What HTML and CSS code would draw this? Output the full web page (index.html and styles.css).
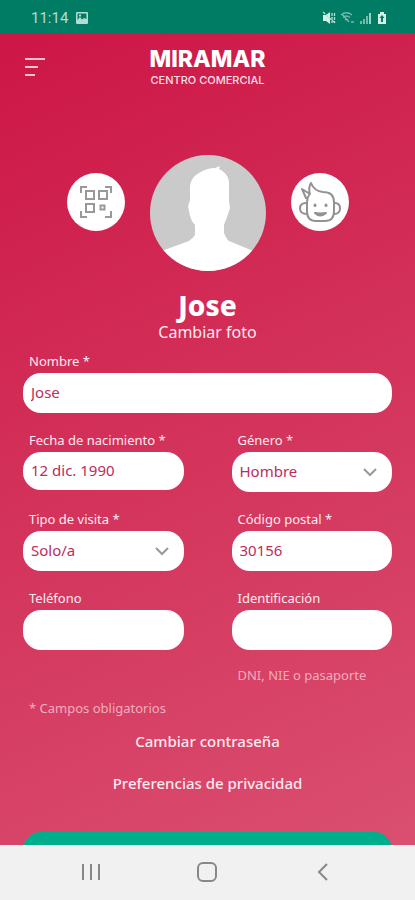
FILE: index.html
```html
<!DOCTYPE html>
<html lang="es">
<head>
<meta charset="utf-8">
<meta name="viewport" content="width=device-width, initial-scale=1">
<title>Miramar Centro Comercial</title>
<link rel="stylesheet" href="styles.css">
</head>
<body>
<div class="status">
  <span class="time">11:14</span>
  <svg class="status-picture" width="14" height="14" viewBox="0 0 14 14"><path fill="#b5dcd2" fill-rule="evenodd" d="M2 1h10q1 0 1 1v10q0 1-1 1H2q-1 0-1-1V2q0-1 1-1zM2.500 2.500v6.500l2.500-3 2 2.500 2-1.500 2.500 1V2.500zM4 3.500h2v2H4z"/></svg>
  <div class="status-icons">
    <svg width="14" height="14" viewBox="0 0 14 14"><path fill="#d5eee7" d="M1 4h3l4-3v12L4 10H1z"/><path d="M1 1l12 11M10 2v10M12.500 2v10" stroke="#b5dcd2" stroke-width="1.300" fill="none" stroke-dasharray="3 1"/></svg>
    <svg width="15" height="14" viewBox="0 0 15 14"><path d="M1 4q5.500-4.500 11 0M3 6.500q3.500-3 7 0M5 9q1.500-1.500 3 0M2 3l7 8M11 11h3" stroke="#75b9a8" stroke-width="1.300" fill="none"/></svg>
    <svg width="14" height="14" viewBox="0 0 14 14"><path d="M2 13v-3M5 13V8M8 13V5" stroke="#75b9a8" stroke-width="2"/><path d="M11 13V2" stroke="#9dd0c3" stroke-width="2"/></svg>
    <svg width="10" height="14" viewBox="0 0 10 14"><path fill="#d5eee7" d="M3 1h4v2h2v10H1V3h2z"/><path fill="#007c64" d="M5 4l2.500 3H6v4H4V7H2.500z"/></svg>
  </div>
</div>

<main class="app">
  <header class="header">
    <button class="menu" aria-label="Menú">
      <svg width="22" height="20" viewBox="0 0 22 20"><path d="M1 2h20M1 10h13M1 18h10" stroke="#f5c3cf" stroke-width="2"/></svg>
    </button>
    <div class="brand">
      <span class="brand-name">MIRAMAR</span>
      <span class="brand-sub">CENTRO COMERCIAL</span>
    </div>
  </header>

  <section class="profile">
    <button class="round" aria-label="Código QR">
      <svg width="34" height="34" viewBox="0 0 34 34" fill="none" stroke="#999" stroke-width="2"><path d="M2 8V2h6M26 2h6v6M2 26v6h6M32 26v6h-6"/><rect x="7" y="6" width="8" height="8"/><rect x="20" y="6" width="8" height="8"/><rect x="7" y="19" width="8" height="8"/><rect x="21.500" y="20.500" width="4" height="4"/></svg>
    </button>
    <svg class="avatar" viewBox="0 0 116 116"><defs><clipPath id="disc"><circle cx="58" cy="58" r="58"/></clipPath></defs><g clip-path="url(#disc)"><path fill="#cacaca" d="M0 0h116v116H0z"/><path fill="#fff" d="M0 101L17 94L39 86q4-3 6-6v-10q-4-4-5-9l-2-10 2-6V31q1-9 9-13 8-5 16-5l5-2-1 3q9 4 10 13v19l1 7-3 9q-2 5-3 8v8q3 7 5 8l17 7 21 9v20H0z"/></g></svg>
    <button class="round" aria-label="Zona infantil">
      <svg width="44" height="44" viewBox="0 0 44 44" fill="none" stroke="#929292" stroke-width="2" stroke-linejoin="round" stroke-linecap="round"><path d="M11 15q-2 3-2 7v9q0 10 9 10h9q9 0 9-10v-9q0-10-11-10-9-1-12-9-3 5-1 11l-8-5 4 9"/><path d="M8 23q-6 0-6 5.500T9 34M37 23q5 0 5 5.500T36 34M17 33q5 5 11 0q-6 1-11 0z"/><path d="M17 25v.5M28 25v.5" stroke-width="3"/></svg>
    </button>
  </section>
  <h1 class="name">Jose</h1>
  <a class="photo-link" href="#foto">Cambiar foto</a>

  <form class="form">
    <div class="field wide">
      <label for="nombre">Nombre *</label>
      <input id="nombre" type="text" value="Jose">
    </div>
    <div class="field">
      <label for="fecha">Fecha de nacimiento *</label>
      <input id="fecha" class="date" type="text" value="12 dic. 1990">
    </div>
    <div class="field">
      <label for="genero">Género *</label>
      <div class="select">
        <select id="genero"><option>Hombre</option></select>
        <svg class="chevron" width="14" height="9" viewBox="0 0 14 9"><path d="M1 1l6 6 6-6" fill="none" stroke="#999" stroke-width="2"/></svg>
      </div>
    </div>
    <div class="field">
      <label for="visita">Tipo de visita *</label>
      <div class="select">
        <select id="visita"><option>Solo/a</option></select>
        <svg class="chevron" width="14" height="9" viewBox="0 0 14 9"><path d="M1 1l6 6 6-6" fill="none" stroke="#999" stroke-width="2"/></svg>
      </div>
    </div>
    <div class="field">
      <label for="postal">Código postal *</label>
      <input id="postal" type="text" value="30156">
    </div>
    <div class="field">
      <label for="telefono">Teléfono</label>
      <input id="telefono" type="tel">
    </div>
    <div class="field">
      <label for="identificacion">Identificación</label>
      <input id="identificacion" type="text" aria-describedby="ayuda">
    </div>
    <p class="hint" id="ayuda">DNI, NIE o pasaporte</p>
    <p class="required">* Campos obligatorios</p>
    <nav class="links">
      <a href="#contrasena">Cambiar contraseña</a>
      <a href="#privacidad">Preferencias de privacidad</a>
    </nav>
    <button class="save" type="submit" aria-label="Guardar"></button>
  </form>
</main>

<nav class="system">
  <button aria-label="Recientes"><svg width="24" height="24" viewBox="0 0 24 24"><path d="M4 4v16M12 4v16M20 4v16" stroke="#888" stroke-width="2"/></svg></button>
  <button aria-label="Inicio"><svg width="24" height="24" viewBox="0 0 24 24"><rect x="3" y="3" width="18" height="18" rx="5" fill="none" stroke="#888" stroke-width="2"/></svg></button>
  <button aria-label="Atrás"><svg width="24" height="24" viewBox="0 0 24 24"><path d="M16 4l-8 8 8 8" fill="none" stroke="#888" stroke-width="2"/></svg></button>
</nav>
</body>
</html>
```
FILE: styles.css
```css
* {
  box-sizing: border-box;
}

body {
  margin: 0;
  height: 100vh;
  display: flex;
  flex-direction: column;
  font-family: "Noto Sans", sans-serif;
  color: #fff;
}

button {
  border: 0;
  padding: 0;
  background: none;
}

svg {
  display: block;
}

a {
  color: #ffeaf0;
  text-decoration: none;
}

.status {
  flex: none;
  display: flex;
  align-items: center;
  height: 33px;
  padding: 2px 28px 0 31px;
  background: #007c64;
}

.time {
  font: 15px/20px Roboto, sans-serif;
  color: #b5dcd2;
}

.status-picture {
  margin-left: 7px;
}

.status-icons {
  display: flex;
  gap: 4px;
  margin-left: auto;
}

.app {
  flex: 1;
  min-height: 0;
  overflow: hidden;
  display: flex;
  flex-direction: column;
  background: linear-gradient(155deg, #cd1646 0%, #d33059 45%, #da4f70 100%);
}

.header {
  flex: none;
  display: grid;
  grid-template-columns: 1fr auto 1fr;
  align-items: start;
  padding: 12px 24px 0;
}

.menu {
  margin-top: 12px;
  justify-self: start;
}

.brand {
  display: flex;
  flex-direction: column;
  align-items: center;
  font-family: Inter, sans-serif;
}

.brand-name {
  font-size: 23px;
  line-height: 28px;
  font-weight: 800;
}

.brand-sub {
  font-size: 11px;
  line-height: 14px;
  font-weight: 500;
  color: #fbdfe6;
}

.profile {
  flex: none;
  display: flex;
  justify-content: center;
  align-items: center;
  gap: 25px;
  margin-top: 68px;
}

.avatar {
  width: 116px;
  height: 116px;
}

.round {
  display: flex;
  align-items: center;
  justify-content: center;
  width: 58px;
  height: 58px;
  margin-bottom: 22px;
  border-radius: 50%;
  background: #fff;
}

.name {
  margin: 16px 0 0;
  font-size: 28px;
  line-height: 36px;
  font-weight: 800;
  text-align: center;
}

.photo-link {
  align-self: center;
  font-size: 16px;
  line-height: 18px;
}

.form {
  display: grid;
  grid-template-columns: 1fr 1fr;
  column-gap: 48px;
  row-gap: 17px;
  padding: 0 23px;
  margin-top: 10px;
}

.field {
  display: flex;
  flex-direction: column;
  gap: 2px;
}

.wide,
.required,
.links,
.save {
  grid-column: 1 / -1;
}

.field label {
  padding-left: 6px;
  font-size: 13px;
  line-height: 20px;
  color: #ffeaf0;
}

.field input,
.field select {
  width: 100%;
  height: 40px;
  padding: 0 8px 2px;
  border: 0;
  border-radius: 18px;
  background: #fff;
  color: #bd2c5b;
  font: 15px "Noto Sans", sans-serif;
  appearance: none;
}

.field .date {
  height: 38px;
}

.select {
  position: relative;
}

.chevron {
  position: absolute;
  right: 15px;
  top: 16px;
  pointer-events: none;
}

.hint,
.required {
  margin: 0;
  padding-left: 6px;
  font-size: 13px;
  line-height: 16px;
  color: #f0adbe;
}

.hint {
  grid-column: 2;
}

.links {
  display: flex;
  flex-direction: column;
  align-items: center;
  gap: 20px;
  margin-top: -3px;
  font-size: 15px;
  font-weight: 500;
  line-height: 22px;
}

.save {
  height: 40px;
  margin-top: 21px;
  border-radius: 18px;
  background: #00ae8d;
}

.system {
  flex: none;
  display: flex;
  align-items: center;
  justify-content: space-between;
  height: 55px;
  padding: 0 80px 2px 79px;
  background: #f1f1f1;
}
```
